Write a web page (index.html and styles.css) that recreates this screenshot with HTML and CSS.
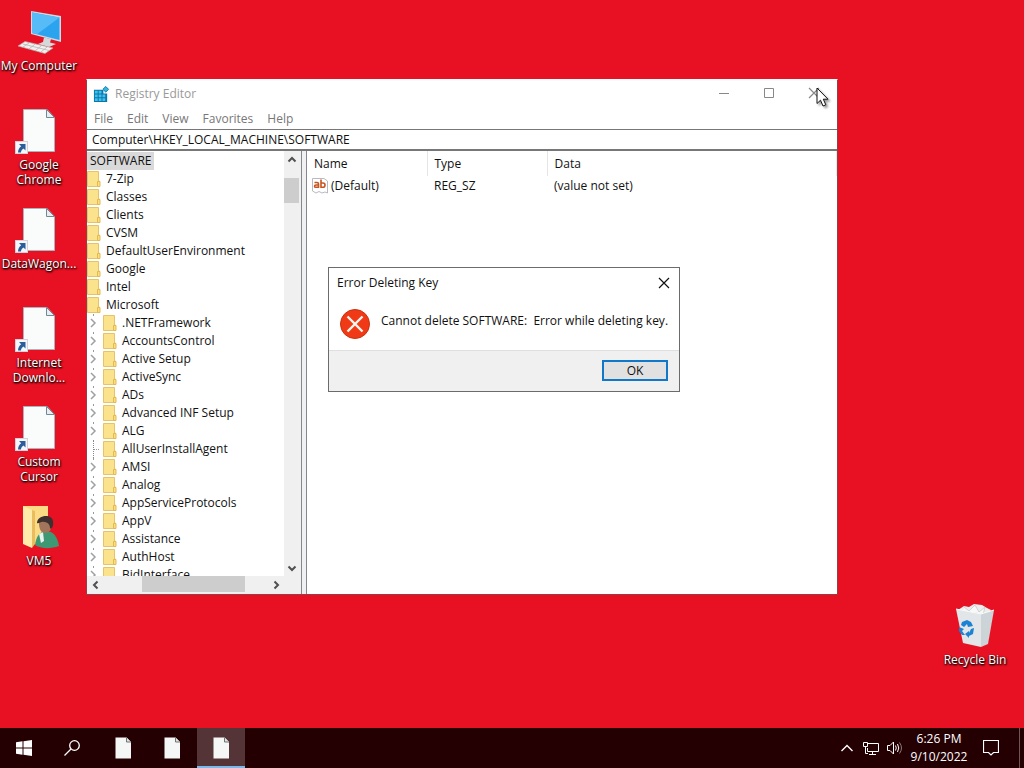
FILE: index.html
```html
<!DOCTYPE html>
<html lang="en">
<head>
    <meta charset="UTF-8">
    <meta name="viewport" content="width=device-width, initial-scale=1.0">
    <title>Registry Editor</title>
    <link rel="stylesheet" href="styles.css">
</head>
<body>
    <!-- Shared icons -->
    <svg class="sprite" aria-hidden="true">
        <symbol id="file" viewBox="0 0 48 48">
            <path d="M8.500 2.500H32L39.500 10.500V44.500H8.500Z" fill="#fafcfc" stroke="#a9b4bd"/>
            <path d="M31.500 2.500V10.500H39.500Z" fill="#e8eef0" stroke="#6f8a96"/>
            <rect x="0.500" y="34.500" width="12" height="12" fill="#f4f6fa" stroke="#d8d0d8"/>
            <path d="M4 37H10.500V43.500L8.500 41.500C6.500 43 6 44 6 45.500H3C3 42.500 4.500 40.500 6.200 39.200Z" fill="#2b5d9b"/>
        </symbol>
        <symbol id="page" viewBox="0 0 17 22">
            <path d="M0.500 0.500H11.500L16 5V21.500H0.500Z" fill="#f4f7f5"/>
            <path d="M11.500 0.500V5H16" fill="#dde3e0" stroke="#6e7573"/>
        </symbol>
        <symbol id="folder" viewBox="0 0 14 16">
            <path d="M0.500 0.500H11.500V10H12.500V15.500H0.500Z" fill="#fbe38e" stroke="#e6c366"/>
            <path d="M10.500 10.500H13V15.500H10.500Z" fill="#fbdf7e" stroke="#e0ba54"/>
        </symbol>
        <symbol id="arrow" viewBox="0 0 10 10">
            <path d="M1.500 6.500L5 3L8.500 6.500" fill="none" stroke="#505050" stroke-width="2"/>
        </symbol>
        <symbol id="close" viewBox="0 0 12 12">
            <path d="M1 1L11 11M11 1L1 11" fill="none" stroke="currentColor" stroke-width="1.200"/>
        </symbol>
    </svg>

    <main class="desktop">
        <div class="shortcuts">
            <button class="shortcut">
                <svg class="shortcut-icon" viewBox="0 0 48 48">
                    <path d="M16 3L46 8V34L16 26Z" fill="#c9dbe5"/>
                    <path d="M17 4.500L44.500 9.500V32L17 25Z" fill="#2ba3ee"/>
                    <path d="M17 4.500L44.500 9.500L22 26.300L17 25Z" fill="#56bbf6"/>
                    <path d="M29 29.500L36 31L35 34.500L41 36L34 39L23 36L28 34Z" fill="#d5d8d9"/>
                    <path d="M10 33.500L38 40L30 45.500L3 38Z" fill="#f2f0ef" stroke="#b9a6a6" stroke-width="0.700"/>
                    <path d="M8 36L34 42.500M14 35L8 39M20 36L14 41M26 38L20 43M32 39L26 44" stroke="#b5b5b5" stroke-width="0.800"/>
                </svg>
                <span>My Computer</span>
            </button>
            <button class="shortcut">
                <svg class="shortcut-icon"><use href="#file"/></svg>
                <span>Google<br>Chrome</span>
            </button>
            <button class="shortcut">
                <svg class="shortcut-icon"><use href="#file"/></svg>
                <span>DataWagon...</span>
            </button>
            <button class="shortcut">
                <svg class="shortcut-icon"><use href="#file"/></svg>
                <span>Internet<br>Downlo...</span>
            </button>
            <button class="shortcut">
                <svg class="shortcut-icon"><use href="#file"/></svg>
                <span>Custom<br>Cursor</span>
            </button>
            <button class="shortcut">
                <svg class="shortcut-icon" viewBox="0 0 48 48">
                    <path d="M8 3H33V41H16Z" fill="#fbdc84"/>
                    <path d="M8 3L17 7V45L8 41Z" fill="#ffecaa"/>
                    <path d="M17 7V45L20 41V8Z" fill="#e9bd5e"/>
                    <path d="M20 42C21 34 24 30 29 28L36 29C40 31 43 36 44 43C36 46 26 46 20 42Z" fill="#3d9873"/>
                    <path d="M24 31L28 29L29 38L26 40Z" fill="#e9f2ed"/>
                    <path d="M24 20C24 16 35 15 36 21C37 27 34 30 30 30C26 30 24 26 24 20Z" fill="#a0755c"/>
                    <path d="M22 20C22 12 37 10 38 18C39 24 36 27 35 25C35 21 32 19 29 19C26 18 24 21 22 20Z" fill="#3f3030"/>
                </svg>
                <span>VM5</span>
            </button>
        </div>

        <button class="shortcut recycle-bin">
            <svg class="shortcut-icon" viewBox="0 0 48 48">
                <path d="M7 8L13 4L18 5L23 2L31 3L36 6L40 8L36 17H10Z" fill="#eceeee"/>
                <path d="M13 5L18 9L24 3L28 10L34 5L32 13L25 11L18 14L12 10" fill="#f8f8f8" stroke="#c5c9ca" stroke-width="0.800"/>
                <path d="M5 7L30 12V45L12 41Z" fill="#e2e6e8"/>
                <path d="M30 12L43 8L37 42L30 45Z" fill="#cdd4d7"/>
                <path d="M5 7L30 12L43 8" fill="none" stroke="#f7fafa"/>
                <g fill="#1c82d1">
                    <path d="M11 20L16 18L20 20L22 24L17 25L16 22L13 25L10 23Z"/>
                    <path d="M23 26L22 32L18 34V36L14 32L18 29V31L20 27Z"/>
                    <path d="M8 25L13 27L11 29L14 33L11 33L8 29Z"/>
                </g>
            </svg>
            <span>Recycle Bin</span>
        </button>

        <section class="window" aria-label="Registry Editor">
            <header class="titlebar">
                <svg class="app-icon" viewBox="0 0 18 18">
                    <path d="M1 4H11V8H15V17H1Z" fill="#0877ad"/>
                    <path d="M2 5H5V8H2ZM6 5H9V8H6ZM2 9H5V12H2ZM6 9H9V12H6ZM10 9H13V12H10ZM2 13H5V16H2ZM6 13H9V16H6ZM10 13H13V16H10Z" fill="#43c0e8"/>
                    <path d="M13.500 0.500L16.500 3.500L13.500 6.500L10.500 3.500Z" fill="#36b6df" stroke="#0877ad"/>
                </svg>
                <h1>Registry Editor</h1>
                <div class="window-buttons">
                    <button aria-label="Minimize"><svg viewBox="0 0 12 12"><path d="M1 6.500H11" stroke="currentColor"/></svg></button>
                    <button aria-label="Maximize"><svg viewBox="0 0 12 12"><path d="M1.500 1.500H10.500V10.500H1.500Z" fill="none" stroke="currentColor"/></svg></button>
                    <button aria-label="Close"><svg><use href="#close"/></svg></button>
                </div>
            </header>
            <nav class="menubar">
                <button>File</button>
                <button>Edit</button>
                <button>View</button>
                <button>Favorites</button>
                <button>Help</button>
            </nav>
            <input class="address" type="text" aria-label="Address" value="Computer\HKEY_LOCAL_MACHINE\SOFTWARE">

            <div class="panes">
                <div class="tree-pane">
                    <ul class="tree" id="tree">
                        <li class="root"><span>SOFTWARE</span></li>
                    </ul>
                    <div class="scroll-v">
                        <button aria-label="Scroll up"><svg><use href="#arrow"/></svg></button>
                        <div class="track"><div class="thumb"></div></div>
                        <button class="down" aria-label="Scroll down"><svg><use href="#arrow"/></svg></button>
                    </div>
                    <div class="scroll-h">
                        <button class="left" aria-label="Scroll left"><svg><use href="#arrow"/></svg></button>
                        <div class="track"><div class="thumb"></div></div>
                        <button class="right" aria-label="Scroll right"><svg><use href="#arrow"/></svg></button>
                    </div>
                </div>
                <div class="list-pane">
                    <table class="values">
                        <thead>
                            <tr><th>Name</th><th>Type</th><th class="data">Data</th></tr>
                        </thead>
                        <tbody>
                            <tr>
                                <td class="value-name">
                                    <svg class="value-icon" viewBox="0 0 16 16">
                                        <path d="M0.500 0.500H12L15.500 3V15L13 14L10 15L7 13.500L4 15L0.500 13Z" fill="#fff" stroke="#b9b9c3"/>
                                        <g fill="none" stroke="#c9541f" stroke-width="1.600">
                                            <path d="M2.500 4.500H5Q6.500 4.500 6.500 6V10M6.500 7H4Q2.500 7 2.500 8.200Q2.500 9.300 4 9.300H6.500"/>
                                            <path d="M9 1.500V10M9 5H11Q13 5 13 7Q13 9.300 11 9.300H9"/>
                                        </g>
                                    </svg>(Default)</td>
                                <td>REG_SZ</td>
                                <td>(value not set)</td>
                            </tr>
                        </tbody>
                    </table>
                </div>
            </div>
        </section>

        <section class="dialog" role="dialog" aria-labelledby="dialogTitle">
            <header class="dialog-title">
                <h2 id="dialogTitle">Error Deleting Key</h2>
                <button aria-label="Close"><svg><use href="#close"/></svg></button>
            </header>
            <div class="dialog-body">
                <svg class="error-icon" viewBox="0 0 32 32">
                    <circle cx="16" cy="16" r="14.500" fill="#f03a17" stroke="#c9300f"/>
                    <path d="M8.500 8.500L23.500 23.500M23.500 8.500L8.500 23.500" stroke="#fff5ee" stroke-width="2.400"/>
                </svg>
                <p>Cannot delete SOFTWARE:&nbsp; Error while deleting key.</p>
            </div>
            <footer class="dialog-footer">
                <button>OK</button>
            </footer>
        </section>

        <svg class="cursor" viewBox="0 0 14 20" aria-hidden="true">
            <path d="M1 1V16.500L4.500 13.200L7 19L9.800 17.800L7.300 12.200H12Z" fill="#fff" stroke="#111"/>
        </svg>
    </main>

    <footer class="taskbar">
        <button class="task" aria-label="Start">
            <svg class="start-icon" viewBox="0 0 16 16">
                <path d="M0 2.200L6.500 1.300V7.500H0ZM7.500 1.200L16 0V7.500H7.500ZM0 8.500H6.500V14.700L0 13.800ZM7.500 8.500H16V16L7.500 14.800Z" fill="#fff"/>
            </svg>
        </button>
        <button class="task search" aria-label="Search">
            <svg class="start-icon" viewBox="0 0 16 16">
                <g fill="none" stroke="#fff" stroke-width="1.300"><circle cx="10.500" cy="5.500" r="4.800"/><path d="M7 9L0.500 15.500"/></g>
            </svg>
        </button>
        <button class="task app" aria-label="Pinned app"><svg class="task-icon"><use href="#page"/></svg></button>
        <button class="task app" aria-label="Pinned app"><svg class="task-icon"><use href="#page"/></svg></button>
        <button class="task app active" aria-label="Registry Editor"><svg class="task-icon"><use href="#page"/></svg></button>

        <div class="tray">
            <button aria-label="Show hidden icons"><svg viewBox="0 0 16 16"><path d="M2.500 11L8 5.500L13.500 11" fill="none" stroke="#fff" stroke-width="1.400"/></svg></button>
            <button aria-label="Network"><svg viewBox="0 0 16 16"><path d="M5 3.500H15.500V11.500H4.500V8M9.500 11.500V14.500M6 14.500H13M0.500 2.500H4.500V6.500H0.500ZM2.500 6.500V13.500H5" fill="none" stroke="#fff"/></svg></button>
            <button aria-label="Volume"><svg viewBox="0 0 16 16"><path d="M0.500 5.500H3L6.500 2V14L3 10.500H0.500ZM8.500 5.500Q10 8 8.500 10.500M10.500 4Q13 8 10.500 12" fill="none" stroke="#fff"/><path d="M12.500 2.500Q16.500 8 12.500 13.500" fill="none" stroke="#8a7a7b"/></svg></button>
            <button class="clock">6:26 PM<br>9/10/2022</button>
            <button class="notifications" aria-label="Notifications"><svg viewBox="0 0 16 16"><path d="M0.500 0.500H15.500V12.500H10.500L8 15L5.500 12.500H0.500Z" fill="none" stroke="#fff" stroke-width="1.200"/></svg></button>
            <button class="show-desktop" aria-label="Show desktop"></button>
        </div>
    </footer>

    <script>
        // Keys directly under SOFTWARE
        const keys = ["7-Zip", "Classes", "Clients", "CVSM", "DefaultUserEnvironment", "Google", "Intel", "Microsoft"];

        // Subkeys of Microsoft
        const subkeys = [
            ".NETFramework", "AccountsControl", "Active Setup", "ActiveSync", "ADs",
            "Advanced INF Setup", "ALG", "AllUserInstallAgent", "AMSI", "Analog",
            "AppServiceProtocols", "AppV", "Assistance", "AuthHost", "BidInterface"
        ];

        // Keys that have nothing to expand
        const leaves = ["AllUserInstallAgent"];

        const folder = '<svg class="folder"><use href="#folder"/></svg>';

        function addKey(name, nested) {
            const li = document.createElement('li');
            let expander = '';
            if (nested) {
                li.className = leaves.includes(name) ? 'nested leaf' : 'nested';
                expander = leaves.includes(name)
                    ? '<i class="branch"></i>'
                    : `<button aria-label="Expand ${name}"><svg viewBox="0 0 8 10"><path d="M2 1L6 5L2 9" fill="none" stroke="#a0a0a0" stroke-width="1.500"/></svg></button>`;
            }
            li.innerHTML = `${expander}${folder}<span>${name}</span>`;
            document.getElementById('tree').appendChild(li);
        }

        keys.forEach(name => addKey(name, false));
        subkeys.forEach(name => addKey(name, true));
    </script>
</body>
</html>
```
FILE: styles.css
```css
* {
    margin: 0;
    padding: 0;
    box-sizing: border-box;
}

body {
    display: flex;
    flex-direction: column;
    min-height: 100vh;
    font-family: "Segoe UI", "Open Sans", sans-serif;
    font-size: 12px;
    line-height: 16px;
    color: #111;
}

button {
    background: none;
    border: none;
    font: inherit;
    color: inherit;
}

svg {
    display: block;
    flex: none;
}

.sprite {
    position: absolute;
    width: 0;
    height: 0;
}

/* Desktop */
.desktop {
    position: relative;
    flex: 1;
    background-color: #e81123;
    overflow: hidden;
}

.shortcuts {
    display: grid;
    grid-auto-rows: 99px;
    width: 78px;
    padding-top: 8px;
}

.shortcut {
    display: flex;
    flex-direction: column;
    align-items: center;
    align-self: start;
    gap: 2px;
    line-height: 15px;
    color: #fff;
    white-space: nowrap;
    text-shadow: 1px 1px 2px #000, 0 1px 2px #000;
}

.shortcut-icon {
    width: 48px;
    height: 48px;
}

.recycle-bin {
    position: absolute;
    right: 10px;
    bottom: 61px;
    width: 78px;
}

/* Registry window */
.window {
    position: absolute;
    left: 86px;
    top: 79px;
    width: 752px;
    height: 516px;
    display: flex;
    flex-direction: column;
    background: #fff;
    border: 1px solid #9a3b45;
    border-top-color: #fff;
}

.titlebar {
    display: flex;
    align-items: center;
    height: 28px;
    padding-left: 6px;
    gap: 5px;
    color: #999;
}

.titlebar h1 {
    flex: 1;
    font-size: 12px;
    font-weight: normal;
}

.app-icon {
    width: 17px;
    height: 17px;
}

.window-buttons {
    display: flex;
    align-self: flex-start;
    padding-right: 1px;
    color: #888;
}

.window-buttons button {
    display: flex;
    align-items: center;
    justify-content: center;
    width: 45px;
    height: 26px;
}

.window-buttons svg,
.dialog-title svg {
    width: 12px;
    height: 12px;
}

.menubar {
    display: flex;
    height: 21px;
    color: #777;
}

.menubar button {
    padding: 0 7px;
}

.address {
    height: 21px;
    padding: 0 5px;
    border: solid #777;
    border-width: 1px 0;
    font: inherit;
    color: inherit;
    background: #fff;
    outline: none;
}

.panes {
    display: flex;
    flex: 1;
    min-height: 0;
    background: #f0f0f0;
    border-top: 1px solid #777;
}

/* Key tree */
.tree-pane {
    display: grid;
    grid-template-columns: 1fr 17px;
    grid-template-rows: 1fr 17px;
    width: 215px;
    padding-bottom: 1px;
    border-right: 1px solid #828790;
    overflow: hidden;
}

.tree {
    list-style: none;
    min-height: 0;
    padding-top: 1px;
    overflow: hidden;
    background: #fff;
}

.tree li {
    display: flex;
    align-items: center;
    height: 18px;
    white-space: nowrap;
}

.tree .root span {
    padding: 1px 3px;
    background: #d9d9d9;
}

.tree .folder {
    width: 14px;
    height: 16px;
    margin-right: 5px;
}

.tree .nested {
    padding-left: 16px;
    background: linear-gradient(#999, #999) 6px 0 / 1px 2px no-repeat;
}

.tree .nested button {
    width: 16px;
    margin-left: -16px;
    padding-left: 2px;
}

.tree .nested button svg {
    width: 8px;
    height: 10px;
}

.tree .leaf {
    background: none;
}

.branch {
    align-self: stretch;
    width: 10px;
    margin-left: -10px;
    border-left: 1px dotted #888;
    background: repeating-linear-gradient(90deg, #999 0 1px, #fff 1px 2px) 0 9px / 6px 1px no-repeat;
}

.scroll-v,
.scroll-h {
    display: flex;
    align-items: stretch;
    background: #f0f0f0;
}

.scroll-v {
    flex-direction: column;
    padding-right: 2px;
}

.scroll-v button,
.scroll-h button {
    display: flex;
    align-items: center;
    justify-content: center;
    height: 17px;
}

.scroll-h button {
    width: 17px;
}

.scroll-v svg,
.scroll-h svg {
    width: 10px;
    height: 10px;
}

.track {
    flex: 1;
}

.thumb {
    background: #cdcdcd;
}

.scroll-v .thumb {
    height: 25px;
    margin-top: 10px;
}

.scroll-h .thumb {
    width: 103px;
    height: 16px;
    margin-left: 38px;
}

.down svg {
    transform: rotate(180deg);
}

.left svg {
    transform: rotate(-90deg);
}

.right svg {
    transform: rotate(90deg);
}

/* Value list */
.list-pane {
    flex: 1;
    margin-left: 4px;
    background: #fff;
    border-left: 1px solid #828790;
}

.values {
    width: 100%;
    border-collapse: collapse;
    table-layout: fixed;
}

.values th,
.values td {
    height: 20px;
    padding-left: 7px;
    text-align: left;
    font-weight: normal;
}

.values th {
    width: 120px;
    height: 25px;
    border-right: 1px solid #e5e5e5;
}

.values .data {
    width: auto;
}

.values .value-name {
    display: flex;
    align-items: center;
    gap: 3px;
    padding-left: 5px;
}

.value-icon {
    width: 16px;
    height: 16px;
}

/* Error dialog */
.dialog {
    position: absolute;
    left: 328px;
    top: 267px;
    width: 352px;
    background: #fff;
    border: 1px solid #6b6b6b;
}

.dialog-title {
    display: flex;
    align-items: center;
    justify-content: space-between;
    height: 30px;
    padding: 0 9px 0 8px;
}

.dialog-title h2 {
    font-size: 12px;
    font-weight: normal;
}

.dialog-body {
    display: flex;
    gap: 10px;
    height: 52px;
    padding: 10px;
}

.dialog-body p {
    padding-top: 5px;
    white-space: nowrap;
}

.error-icon {
    width: 32px;
    height: 32px;
}

.dialog-footer {
    display: flex;
    justify-content: flex-end;
    padding: 9px 11px 10px;
    background: #f0f0f0;
    border-top: 1px solid #dfdfdf;
}

.dialog-footer button {
    width: 66px;
    height: 21px;
    background: #e1e1e1;
    border: 2px solid #0f78c8;
}

.cursor {
    position: absolute;
    left: 816px;
    top: 87px;
    width: 14px;
    height: 20px;
    filter: drop-shadow(2px 2px 1px rgba(0,0,0,0.4));
}

/* Taskbar */
.taskbar {
    display: flex;
    height: 40px;
    background: #250003;
    color: #fff;
}

.task {
    display: flex;
    align-items: center;
    justify-content: center;
    width: 48px;
}

.task.app {
    margin-right: 1px;
}

.task.search {
    margin-right: 3px;
}

.task.active {
    background: #543437;
    box-shadow: inset 0 -2px #76b9ed;
}

.start-icon {
    width: 16px;
    height: 16px;
}

.task-icon {
    width: 17px;
    height: 22px;
}

.tray {
    display: flex;
    align-items: center;
    margin-left: auto;
}

.tray button {
    display: flex;
    align-items: center;
    justify-content: center;
    width: 24px;
    height: 40px;
}

.tray svg {
    width: 16px;
    height: 16px;
}

.tray .clock {
    width: 64px;
    line-height: 18px;
}

.tray .notifications {
    width: 40px;
    margin-right: 8px;
}

.tray .show-desktop {
    width: 5px;
    border-left: 1px solid #6b5557;
}
```
